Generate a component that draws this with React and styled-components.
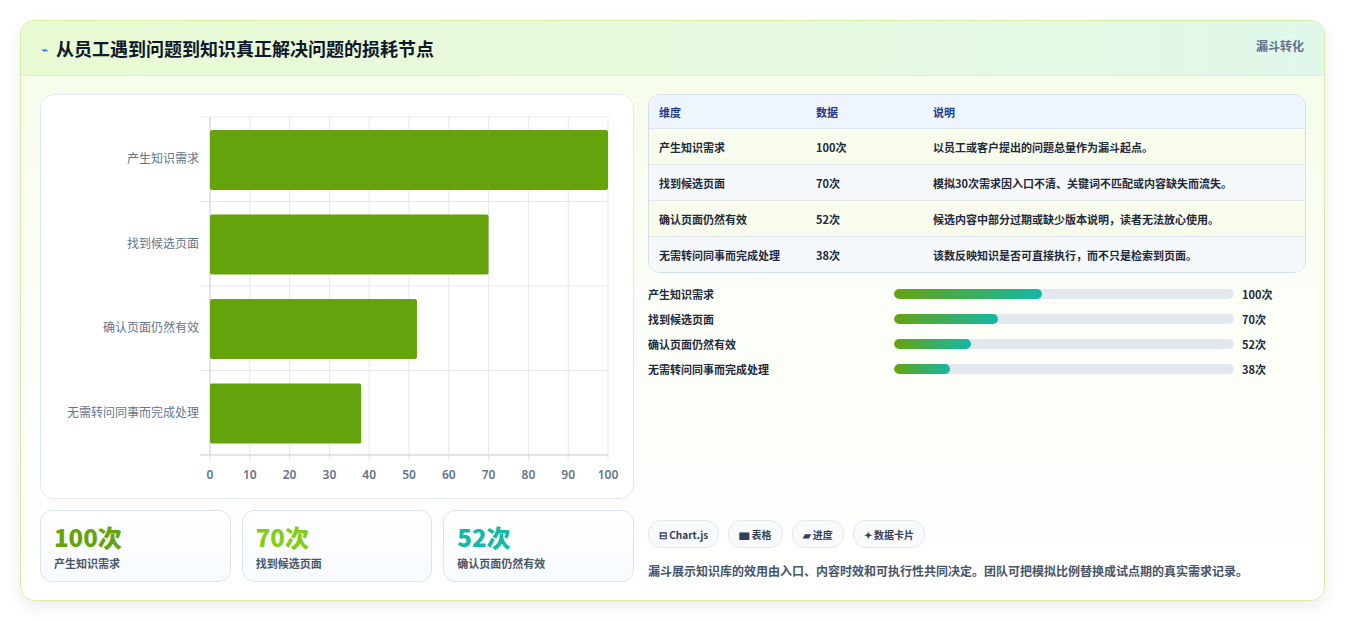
import React from "react";
import styled, { createGlobalStyle } from "styled-components";

const Global = createGlobalStyle`
  html,body{margin:0;background:#fff;}
  body{font-family:"Noto Sans CJK SC","Noto Sans",sans-serif;color:#0f172a;}
`;
const Page = styled.div`padding:20px 20px 20px 20px;`;
const Card = styled.div`
  border:1px solid #d6efa6;border-radius:14px;overflow:hidden;
  background:linear-gradient(180deg,#f5fde8 0%,#fbfef6 45%,#ffffff 100%);
  box-shadow:0 6px 16px rgba(15,23,42,0.08);
`;
const Header = styled.div`
  height:54px;display:flex;align-items:center;justify-content:space-between;
  padding:0 20px;border-bottom:1px solid #e3efd0;
  background:linear-gradient(90deg,#e9fad3 0%,#e6f9e0 60%,#e0f8ea 100%);
`;
const Title = styled.h1`
  margin:0;font-size:18px;font-weight:700;color:#0f172a;display:flex;align-items:center;gap:8px;
`;
const Bolt = styled.span`color:#2563eb;font-size:12px;font-weight:400;`;
const Tag = styled.span`font-size:12px;font-weight:700;color:#64748b;align-self:flex-start;margin-top:16px;`;
const Body = styled.div`display:grid;grid-template-columns:594px 1fr;gap:14px;padding:18px 18px 18px 19px;`;
const Left = styled.div`display:flex;flex-direction:column;gap:11px;`;
const ChartBox = styled.div`height:403px;border:1px solid #e2e8f0;border-radius:14px;background:#fff;`;
const Kpis = styled.div`display:grid;grid-template-columns:repeat(3,1fr);gap:11px;`;
const Kpi = styled.div`
  height:72px;border:1px solid #dbe5f0;border-radius:12px;padding:12px 13px;box-sizing:border-box;
  background:linear-gradient(180deg,#fff,#f7faff);
`;
const KpiVal = styled.div`font-size:24px;font-weight:800;line-height:28px;color:${p=>p.c};`;
const KpiLab = styled.div`font-size:11px;font-weight:700;color:#475569;margin-top:4px;`;
const Right = styled.div`display:flex;flex-direction:column;`;
const Table = styled.div`border:1px solid #d5dfec;border-radius:12px;overflow:hidden;`;
const Row = styled.div`
  display:grid;grid-template-columns:157px 117px 1fr;height:${p=>p.h}px;align-items:center;
  padding-left:10px;font-size:11px;font-weight:${p=>p.head?700:600};
  color:${p=>p.head?"#1e3a8a":"#1e293b"};background:${p=>p.bg};
  border-top:${p=>p.head?"none":"1px solid #dde5ef"};
`;
const Bars = styled.div`display:flex;flex-direction:column;gap:7px;margin-top:12px;`;
const BarRow = styled.div`display:grid;grid-template-columns:246px 340px 1fr;align-items:center;height:18px;font-size:11px;font-weight:700;color:#1e293b;`;
const Track = styled.div`height:10px;border-radius:5px;background:#e2e8f0;overflow:hidden;`;
const Fill = styled.div`height:100%;border-radius:5px;background:linear-gradient(90deg,#65a30d,#14b8a6);`;
const BarVal = styled.span`padding-left:8px;`;
const Spacer = styled.div`flex:1;`;
const Chips = styled.div`display:flex;gap:9px;`;
const Chip = styled.span`
  height:26px;padding:0 10px;border:1px solid #e2e8f0;border-radius:13px;background:#f8fafc;
  display:inline-flex;align-items:center;gap:3px;font-size:10px;font-weight:700;color:#334155;
`;
const Note = styled.p`margin:14px 0 3px;font-size:12px;font-weight:700;color:#475569;`;

const data=[["产生知识需求",100,"以员工或客户提出的问题总量作为漏斗起点。"],["找到候选页面",70,"模拟30次需求因入口不清、关键词不匹配或内容缺失而流失。"],["确认页面仍然有效",52,"候选内容中部分过期或缺少版本说明，读者无法放心使用。"],["无需转问同事而完成处理",38,"该数反映知识是否可直接执行，而不只是检索到页面。"]];

function Chart(){
  const x0=169,x1=567,y0=22,y1=360,rh=(y1-y0)/4,sx=v=>x0+(x1-x0)*v/100;
  const ticks=[0,10,20,30,40,50,60,70,80,90,100];
  return (
    <svg width="594" height="403" style={{display:"block"}}>
      {ticks.map(t=><line key={t} x1={sx(t)} x2={sx(t)} y1={y0} y2={y1+6} stroke="#e5e7eb"/>)}
      {[0,1,2,3,4].map(i=><line key={i} x1={x0-10} x2={x1} y1={y0+i*rh} y2={y0+i*rh} stroke="#e5e7eb"/>)}
      <line x1={x0} x2={x0} y1={y0} y2={y1} stroke="#d1d5db"/>
      <line x1={x0-10} x2={x1} y1={y1} y2={y1} stroke="#d1d5db"/>
      {data.map((d,i)=>(
        <g key={i}>
          <rect x={x0} y={y0+i*rh+13} width={sx(d[1])-x0} height={60} rx="2" fill="#65a30d"/>
          <text x={x0-11} y={y0+i*rh+rh/2+4} textAnchor="end" fontSize="12" fill="#64748b" fontFamily="Noto Sans CJK SC">{d[0]}</text>
        </g>
      ))}
      {ticks.map(t=><text key={t} x={sx(t)} y={384} textAnchor="middle" fontSize="12" fill="#64748b" fontFamily="Noto Sans" fontWeight="600">{t}</text>)}
    </svg>
  );
}

export default function App(){
  const kc=["#65a30d","#84cc16","#14b8a6"];
  const bg=["#f7fcec","#f6f9fc","#f7fcec","#f6f9fc"];
  const fw=[43.5,30.5,22.6,16.5];
  return (<Page><Global/>
    <Card>
      <Header><Title><Bolt>⌁</Bolt>从员工遇到问题到知识真正解决问题的损耗节点</Title><Tag>漏斗转化</Tag></Header>
      <Body>
        <Left>
          <ChartBox><Chart/></ChartBox>
          <Kpis>{data.slice(0,3).map((d,i)=><Kpi key={i}><KpiVal c={kc[i]}>{d[1]}次</KpiVal><KpiLab>{d[0]}</KpiLab></Kpi>)}</Kpis>
        </Left>
        <Right>
          <Table>
            <Row head h={33} bg="#eef5ff"><span>维度</span><span>数据</span><span>说明</span></Row>
            {data.map((d,i)=><Row key={i} h={35} bg={bg[i]}><span>{d[0]}</span><span>{d[1]}次</span><span>{d[2]}</span></Row>)}
          </Table>
          <Bars>{data.map((d,i)=><BarRow key={i}><span>{d[0]}</span><Track><Fill style={{width:fw[i]+"%"}}/></Track><BarVal>{d[1]}次</BarVal></BarRow>)}</Bars>
          <Spacer/>
          <Chips><Chip>⊟ Chart.js</Chip><Chip>▆ 表格</Chip><Chip>▰ 进度</Chip><Chip>✦ 数据卡片</Chip></Chips>
          <Note>漏斗展示知识库的效用由入口、内容时效和可执行性共同决定。团队可把模拟比例替换成试点期的真实需求记录。</Note>
        </Right>
      </Body>
    </Card>
  </Page>);
}
